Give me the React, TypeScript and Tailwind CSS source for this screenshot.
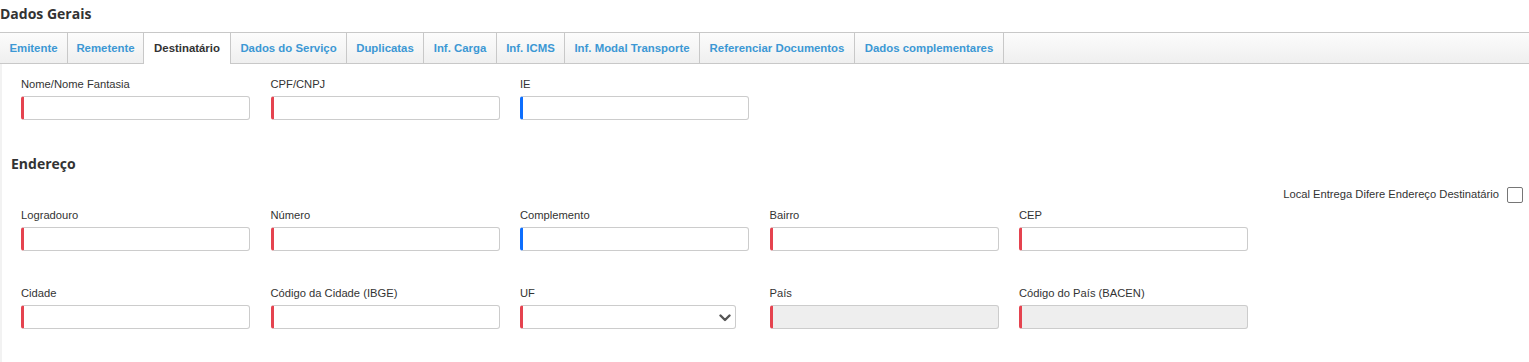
import React from "react";

const RED = "border-l-[#e5434f]";
const BLUE = "border-l-[#0d6efd]";

const tabs = [
  { label: "Emitente", w: "w-[68px]" },
  { label: "Remetente", w: "w-[76px]" },
  { label: "Destinatário", w: "w-[88px]", active: true },
  { label: "Dados do Serviço", w: "w-[116px]" },
  { label: "Duplicatas", w: "w-[77px]" },
  { label: "Inf. Carga", w: "w-[73px]" },
  { label: "Inf. ICMS", w: "w-[68px]" },
  { label: "Inf. Modal Transporte", w: "w-[135px]" },
  { label: "Referenciar Documentos", w: "w-[155px]" },
  { label: "Dados complementares", w: "w-[149px]" },
];

type FieldProps = {
  label: string;
  color: "red" | "blue";
  disabled?: boolean;
  select?: boolean;
};

function Field({ label, color, disabled, select }: FieldProps) {
  const c = color === "red" ? RED : BLUE;
  return (
    <div className="flex flex-col w-[229px]">
      <div className="text-[11.2px] leading-[14px] text-[#333] mb-[5px]">{label}</div>
      {select ? (
        <div
          className={`h-[24px] w-[216px] rounded-[3px] border border-[#ccc] border-l-[3px] ${c} bg-white flex items-center justify-end pr-[4px]`}
        >
          <svg width="12" height="8" viewBox="0 0 12 8" className="mt-[2px]">
            <path d="M1.5 1.5 L6 6 L10.5 1.5" fill="none" stroke="#555" strokeWidth="2.4" strokeLinecap="round" strokeLinejoin="round" />
          </svg>
        </div>
      ) : (
        <div
          className={`h-[24px] w-[229px] rounded-[3px] border border-[#ccc] border-l-[3px] ${c} ${
            disabled ? "bg-[#eeeeee]" : "bg-white"
          }`}
        />
      )}
    </div>
  );
}

export default function App() {
  return (
    <div
      className="w-[1529px] h-[362px] bg-white overflow-hidden flex flex-col"
      style={{ fontFamily: "'Liberation Sans', Arial, sans-serif" }}
    >
      <div className="h-[32px] shrink-0">
        <div className="text-[14px] leading-[28px] font-bold text-[#333]" style={{ fontFamily: "'Open Sans', sans-serif" }}>
          Dados Gerais
        </div>
      </div>
      <div className="relative h-[32px] shrink-0 flex bg-linear-to-b from-[#fcfcfc] to-[#efefef] border-y border-[#c8c8c8]">
        {tabs.map((t) => (
          <div
            key={t.label}
            className={`${t.w} h-[31px] flex items-center justify-center text-[11.4px] font-bold border-r border-[#c8c8c8] ${
              t.active ? "bg-white text-[#333] -mb-px border-l border-l-[#c8c8c8] -ml-px" : "text-[#3c98d4]"
            }`}
          >
            {t.label}
          </div>
        ))}
      </div>
      <div className="flex-1 border-l-[2px] border-[#f2f2f2]">
        <div className="pt-[13px] pl-[19px] flex gap-x-[20.5px]">
          <Field label="Nome/Nome Fantasia" color="red" />
          <Field label="CPF/CNPJ" color="red" />
          <Field label="IE" color="blue" />
        </div>
        <div
          className="mt-[34px] pl-[9px] text-[14px] leading-[20px] font-bold text-[#333]"
          style={{ fontFamily: "'Open Sans', sans-serif" }}
        >
          Endereço
        </div>
        <div className="mt-[12px] h-[17px] flex items-center justify-end pr-[6px] gap-[8px]">
          <span className="text-[11.2px] text-[#333]">Local Entrega Difere Endereço Destinatário</span>
          <span className="w-[16px] h-[16px] border border-[#767676] rounded-[2px] bg-white" />
        </div>
        <div className="mt-[5px] pl-[19px] flex gap-x-[20.5px]">
          <Field label="Logradouro" color="red" />
          <Field label="Número" color="red" />
          <Field label="Complemento" color="blue" />
          <Field label="Bairro" color="red" />
          <Field label="CEP" color="red" />
        </div>
        <div className="mt-[35px] pl-[19px] flex gap-x-[20.5px]">
          <Field label="Cidade" color="red" />
          <Field label="Código da Cidade (IBGE)" color="red" />
          <Field label="UF" color="red" select />
          <Field label="País" color="red" disabled />
          <Field label="Código do País (BACEN)" color="red" disabled />
        </div>
      </div>
    </div>
  );
}
